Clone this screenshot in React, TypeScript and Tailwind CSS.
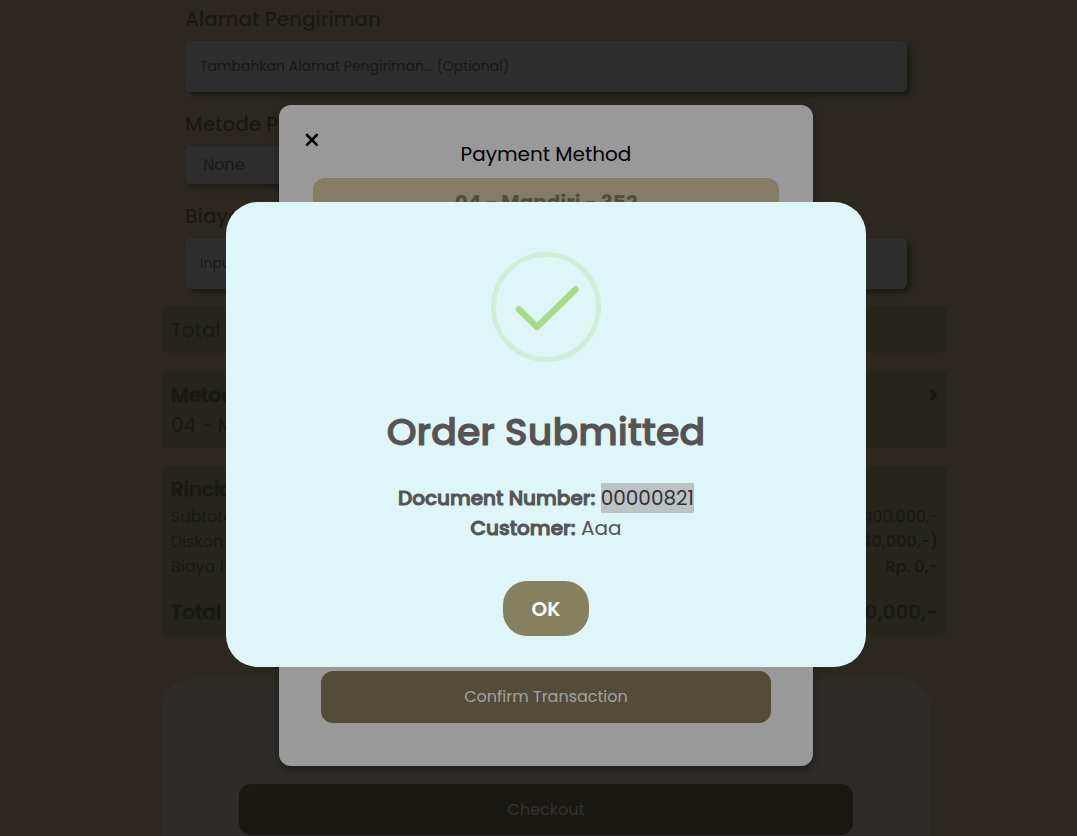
import { useState } from "react";
import type { ReactNode } from "react";

function Field({ id, label, children }: { id: string; label: string; children: ReactNode }) {
  return (
    <div className="mb-[17px]">
      <label htmlFor={id} className="mb-[7px] block text-[20px] leading-[30px] font-medium">
        {label}
      </label>
      {children}
    </div>
  );
}

function TextField({ id, placeholder }: { id: string; placeholder: string }) {
  return (
    <input
      id={id}
      type="text"
      placeholder={placeholder}
      className="block h-[51px] w-full rounded-[6px] bg-[#2e2e2e] px-[15px] text-[14px] text-[#17171a] shadow-[4px_4px_5px_rgba(0,0,0,0.35)] outline-none placeholder:text-[#17171a]"
    />
  );
}

function Row({ name, value, strong }: { name: string; value: string; strong?: boolean }) {
  return (
    <div className="flex justify-between text-[16px] leading-[25px]">
      <dt>{name}</dt>
      <dd className={strong ? "font-semibold" : ""}>{value}</dd>
    </div>
  );
}

function OrderForm() {
  return (
    <main className="h-full overflow-hidden pt-1 pl-[15px]">
      <div className="mx-auto w-full max-w-[768px]">
        <form className="px-[23px]">
          <Field id="address" label="Alamat Pengiriman">
            <TextField id="address" placeholder="Tambahkan Alamat Pengiriman... (Optional)" />
          </Field>
          <Field id="shipping" label="Metode Pengiriman">
            <select
              id="shipping"
              className="block h-[38px] w-[240px] appearance-none rounded-[6px] bg-[#2e2e2e] px-[18px] text-[16px] text-[#17171a] shadow-[4px_4px_5px_rgba(0,0,0,0.35)]"
            >
              <option>None</option>
            </select>
          </Field>
          <Field id="fee" label="Biaya Pengiriman">
            <TextField id="fee" placeholder="Input Biaya Pengiriman" />
          </Field>
        </form>

        <div className="-mr-[17px] flex flex-col gap-[18px]">
          <section className="rounded-[6px] bg-[#25251e] px-[9px] pt-[9px] pb-2 text-[20px] leading-[30px]">Total</section>
          <section className="rounded-[6px] bg-[#25251e] px-[9px] pt-[9px] pb-2 text-[20px] leading-[30px]">
            <div className="flex items-center justify-between">
              <h2 className="font-medium [-webkit-text-stroke:1px]">Metode Pembayaran</h2>
              <svg width="11" height="12" viewBox="0 0 11 12" aria-hidden="true">
                <path d="M1.500 .5H5.800L10.500 5.800 5.800 11.500H1.500L5.500 5.800Z" fill="#191812" />
              </svg>
            </div>
            <p>04 - Mandiri - 352</p>
          </section>
          <section className="rounded-[6px] bg-[#25251e] px-[9px] pt-2 pb-[9px]">
            <h2 className="text-[20px] leading-[30px] font-medium [-webkit-text-stroke:1px]">Rincian Pembayaran</h2>
            <dl>
              <Row name="Subtotal" value="Rp. 400,000,-" />
              <Row name="Diskon" value="(Rp. 40,000,-)" strong />
              <Row name="Biaya Pengiriman" value="Rp. 0,-" strong />
              <div className="mt-[18px] flex justify-between text-[20px] leading-[30px]">
                <dt className="font-medium [-webkit-text-stroke:1px]">Total</dt>
                <dd className="font-semibold">Rp. 360,000,-</dd>
              </div>
            </dl>
          </section>
        </div>

        <footer className="mt-[43px] rounded-t-[28px] bg-[#2d2c29] px-[77px] pt-[105px] pb-8">
          <button type="button" className="h-[51px] w-full rounded-[12px] bg-[#191812] text-[16px] text-[#333230]">
            Checkout
          </button>
        </footer>
      </div>
    </main>
  );
}

function PaymentDialog() {
  return (
    <div className="absolute inset-0 flex items-center justify-center pt-[35px] pl-[15px]">
      <div
        role="dialog"
        aria-label="Payment Method"
        className="flex h-[661px] w-full max-w-[534px] flex-col rounded-[12px] bg-[#999999] px-[34px] pb-[43px] text-black shadow-[0_4px_10px_rgba(0,0,0,0.35)]"
      >
        <div className="-ml-2 flex h-[34px] items-start pt-7">
          <button type="button" aria-label="Close" className="relative z-10 h-[14px] w-[14px]">
            <svg width="14" height="14" viewBox="0 0 14 14" fill="none" aria-hidden="true">
              <path d="M2 2 11.800 11.800M11.800 2 2 11.800" stroke="#000" strokeWidth="2.600" strokeLinecap="round" />
            </svg>
          </button>
        </div>
        <h2 className="text-center text-[20px] leading-[30px]">Payment Method</h2>
        <button
          type="button"
          className="mt-[9px] h-[48px] w-full rounded-[12px] bg-[#847c64] text-[20px] font-bold text-[#524c38]"
        >
          04 - Mandiri - 352
        </button>
        <div className="mt-auto px-2">
          <button type="button" className="h-[52px] w-full rounded-[12px] bg-[#524c38] text-[16px] text-[#a3a3a3]">
            Confirm Transaction
          </button>
        </div>
      </div>
    </div>
  );
}

function SuccessAlert({ onClose }: { onClose: () => void }) {
  return (
    <div className="absolute inset-0 flex items-center justify-center pt-[33px] pl-[15px]">
      <div
        role="alertdialog"
        aria-labelledby="alert-title"
        className="flex w-full max-w-[640px] flex-col items-center rounded-[32px] bg-[#dff6f9] pt-[50px] pb-[31px] text-[#545454]"
      >
        <svg width="110" height="110" viewBox="0 0 110 110" fill="none" aria-hidden="true">
          <circle cx="55" cy="55" r="52.5" stroke="#cfeed8" strokeWidth="5" />
          <path
            d="M28 57.500 46 75 84.500 37.500"
            stroke="#a5dc86"
            strokeWidth="6.500"
            strokeLinecap="round"
            strokeLinejoin="round"
          />
        </svg>
        <h1 id="alert-title" className="mt-10 text-[38px] leading-[60px] font-medium [-webkit-text-stroke:1px]">
          Order Submitted
        </h1>
        <div className="mt-[21px] text-center text-[20px] leading-[30px]">
          <p>
            <b className="font-medium [-webkit-text-stroke:1px]">Document Number:</b>{" "}
            <mark className="inline-block bg-[#bbc3c5] text-[#333333]">00000821</mark>
          </p>
          <p>
            <b className="font-medium [-webkit-text-stroke:1px]">Customer:</b> Aaa
          </p>
        </div>
        <button
          type="button"
          onClick={onClose}
          className="mt-[38px] h-[55px] w-[86px] rounded-[24px] bg-[#87805e] text-[20px] font-semibold text-white"
        >
          OK
        </button>
      </div>
    </div>
  );
}

export default function App() {
  const [alertOpen, setAlertOpen] = useState(true);
  return (
    <div className="relative h-screen overflow-hidden bg-[#2c2821] font-[Poppins,Inter,sans-serif] text-[#191812]">
      <OrderForm />
      <PaymentDialog />
      {alertOpen && <SuccessAlert onClose={() => setAlertOpen(false)} />}
    </div>
  );
}
